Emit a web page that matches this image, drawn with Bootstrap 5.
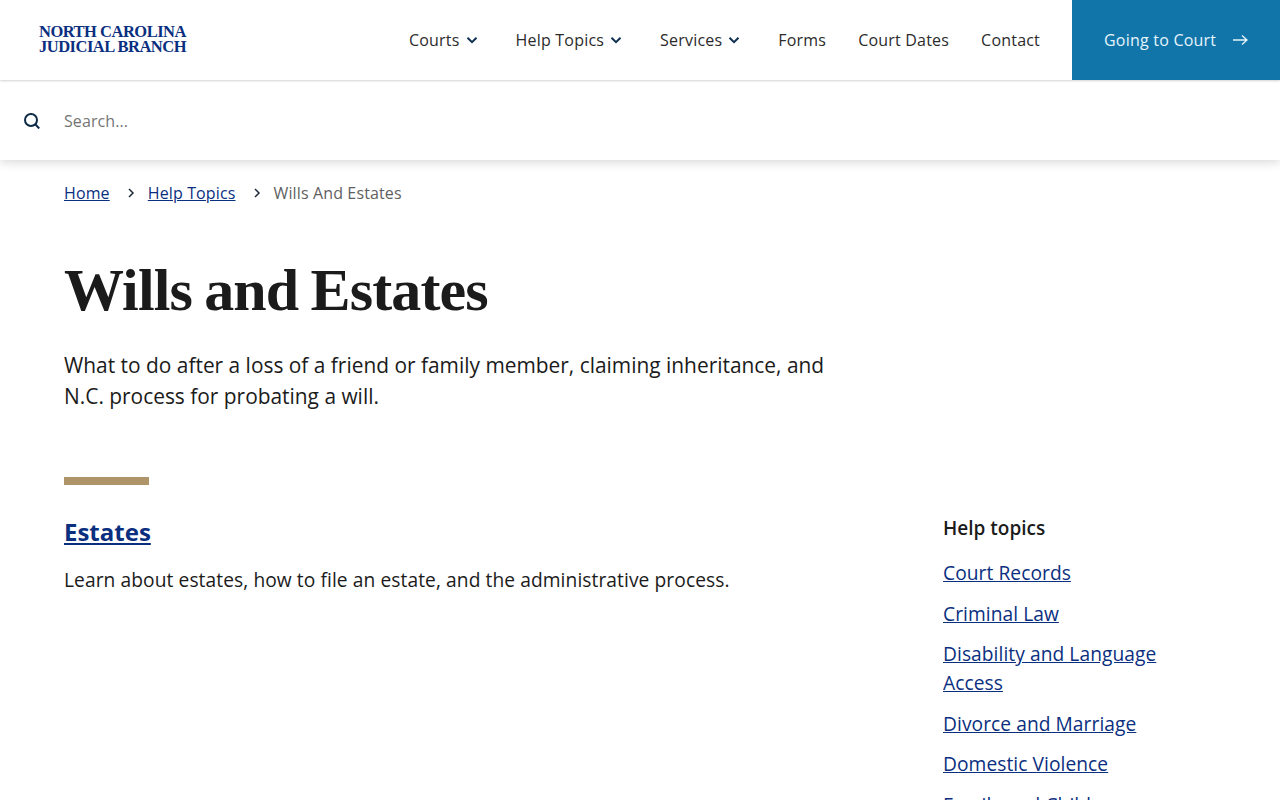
<!DOCTYPE html>
<html lang="en">
<head>
<meta charset="utf-8">
<title>Wills and Estates</title>
<link href="https://cdn.jsdelivr.net/npm/bootstrap@5.3.0/dist/css/bootstrap.min.css" rel="stylesheet">
<style>
body{font-family:"Open Sans",sans-serif;color:#1b1b1b;background:#fff;overflow:hidden;height:800px}
a{color:#0b2f7f}
.top-bar{height:80px;background:#fff;position:relative;z-index:3;box-shadow:0 1px 2px rgba(0,0,0,.18)}
.brand-mark{font-family:"Liberation Serif",serif;font-weight:700;font-size:16.5px;line-height:15.5px;color:#0b2f7f;text-decoration:none;margin-left:39px;margin-bottom:2px;letter-spacing:-.5px}
.main-link{font-size:16px;letter-spacing:.2px;color:#2b2b2b;text-decoration:none}
.main-links{gap:32px;margin-right:32px}
.chev{margin-left:4px;margin-right:4px}
.cta{width:208px;height:80px;background:#1275aa;color:#e6f4fb;text-decoration:none;font-size:16px;letter-spacing:.22px;padding-left:32px;padding-right:32px}
.search-bar{height:80px;background:#fff;position:relative;z-index:2;box-shadow:0 2px 10px rgba(0,0,0,.16);padding-left:24px;padding-top:2px}
.search-field{border:0;outline:0;padding:0;font-size:16px;letter-spacing:.1px;margin-left:24px;flex:1;color:#333}
.search-field::placeholder{color:#757575;opacity:1}
.crumbs{padding:1px 64px 0;font-size:16px;letter-spacing:.13px;height:65px;line-height:24px}
.crumb-sep{margin:0 13px 0 17px;width:8px}
.crumb-now{color:#5f5f5f}
.page-title{font-family:"Liberation Serif",serif;font-weight:700;font-size:60px;letter-spacing:-.85px;word-spacing:-2px;line-height:70px;color:#1b1b1b;margin:30px 0 0 64px}
.intro{font-size:20.9px;line-height:31px;width:800px;margin:25px 0 0 64px}
.tan-rule{width:85px;height:8px;background:#ae9468;margin:65px 0 0 64px}
.lower{display:flex;padding-left:64px}
.main-col{width:879px;flex:none}
.sec-title{font-size:24px;font-weight:700;line-height:32px;margin:31px 0 0}
.sec-text{font-size:19.2px;letter-spacing:.08px;line-height:28px;margin:18px 0 0}
.side-col{width:240px;flex:none;padding-top:29px}
.side-title{font-size:19px;font-weight:600;line-height:28px;margin:0 0 16px}
.side-list{list-style:none;margin:0;padding:0;font-size:19.2px;letter-spacing:.06px;line-height:29px}
.side-list li{margin-bottom:11.5px}
</style>
</head>
<body>
<header class="top-bar d-flex align-items-center justify-content-between">
  <a class="brand-mark d-block" href="#">NORTH CAROLINA<br>JUDICIAL BRANCH</a>
  <nav class="d-flex align-items-center">
    <div class="main-links d-flex align-items-center">
      <a class="main-link d-flex align-items-center" href="#">Courts<svg class="chev" width="16" height="16" viewBox="0 0 16 16"><path d="M3.500 5.800 8 10.200l4.500-4.400" fill="none" stroke="#0f2f4f" stroke-width="2"/></svg></a>
      <a class="main-link d-flex align-items-center" href="#">Help Topics<svg class="chev" width="16" height="16" viewBox="0 0 16 16"><path d="M3.500 5.800 8 10.200l4.500-4.400" fill="none" stroke="#0f2f4f" stroke-width="2"/></svg></a>
      <a class="main-link d-flex align-items-center" href="#">Services<svg class="chev" width="16" height="16" viewBox="0 0 16 16"><path d="M3.500 5.800 8 10.200l4.500-4.400" fill="none" stroke="#0f2f4f" stroke-width="2"/></svg></a>
      <a class="main-link" href="#">Forms</a>
      <a class="main-link" href="#">Court Dates</a>
      <a class="main-link" href="#">Contact</a>
    </div>
    <a class="cta d-flex align-items-center justify-content-between" href="#">Going to Court<svg width="16" height="16" viewBox="0 0 16 16"><path d="M1 8h14M10 3.500 15 8l-5 4.500" fill="none" stroke="#e6f4fb" stroke-width="1.300"/></svg></a>
  </nav>
</header>
<div class="search-bar d-flex align-items-center">
  <svg width="16" height="16" viewBox="0 0 16 16"><circle cx="7" cy="7" r="6" fill="none" stroke="#0d2b44" stroke-width="2"/><path d="m11.300 11.300 3.900 4.200" stroke="#0d2b44" stroke-width="2"/></svg>
  <input class="search-field" type="text" placeholder="Search...">
</div>
<div class="crumbs d-flex align-items-center align-self-start">
  <a href="#">Home</a>
  <svg class="crumb-sep" width="8" height="10" viewBox="0 0 8 10"><path d="m2 1 4 4-4 4" fill="none" stroke="#1d2b3a" stroke-width="1.500"/></svg>
  <a href="#">Help Topics</a>
  <svg class="crumb-sep" width="8" height="10" viewBox="0 0 8 10"><path d="m2 1 4 4-4 4" fill="none" stroke="#1d2b3a" stroke-width="1.500"/></svg>
  <span class="crumb-now">Wills And Estates</span>
</div>
<h1 class="page-title">Wills and Estates</h1>
<p class="intro">What to do after a loss of a friend or family member, claiming inheritance, and N.C. process for probating a will.</p>
<div class="tan-rule"></div>
<div class="lower">
  <main class="main-col">
    <h2 class="sec-title"><a href="#">Estates</a></h2>
    <p class="sec-text">Learn about estates, how to file an estate, and the administrative process.</p>
  </main>
  <aside class="side-col">
    <h3 class="side-title">Help topics</h3>
    <ul class="side-list">
      <li><a href="#">Court Records</a></li>
      <li><a href="#">Criminal Law</a></li>
      <li><a href="#">Disability and Language Access</a></li>
      <li><a href="#">Divorce and Marriage</a></li>
      <li><a href="#">Domestic Violence</a></li>
      <li><a href="#">Family and Children</a></li>
    </ul>
  </aside>
</div>
<script src="https://cdn.jsdelivr.net/npm/bootstrap@5.3.0/dist/js/bootstrap.bundle.min.js"></script>
</body>
</html>
